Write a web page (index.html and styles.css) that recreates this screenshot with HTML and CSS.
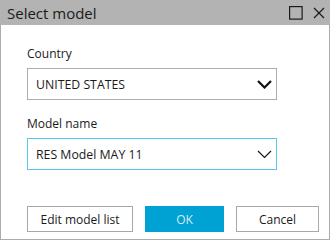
FILE: index.html
```html
<!DOCTYPE html>
<html lang="en">
<head>
  <meta charset="UTF-8" />
  <title>Select model</title>
  <link rel="stylesheet" href="styles.css">
</head>
<body>
  <div class="window">
    <div class="titlebar">
      <span class="title">Select model</span>
      <div class="title-icons">
        <svg width="14" height="14" viewBox="0 0 14 14">
          <rect x="0.6" y="0.6" width="12.5" height="12.5" fill="none" stroke="#1a1a1a" stroke-width="1.2"/>
        </svg>
        <svg width="12" height="12" viewBox="0 0 12 12">
          <path d="M1 1 L11 11 M11 1 L1 11" stroke="#1a1a1a" stroke-width="1.2" fill="none"/>
        </svg>
      </div>
    </div>

    <div class="content">
      <label class="field-label">Country</label>
      <div class="select">
        <span>UNITED STATES</span>
        <svg class="chevron" width="15" height="9" viewBox="0 0 15 9">
          <path d="M1 1 L7.5 7.5 L14 1" stroke="#111" stroke-width="2.2" fill="none"/>
        </svg>
      </div>

      <label class="field-label second">Model name</label>
      <div class="select focused">
        <span>RES Model MAY 11</span>
        <svg class="chevron" width="15" height="9" viewBox="0 0 15 9">
          <path d="M1 1 L7.5 7.5 L14 1" stroke="#111" stroke-width="1.1" fill="none"/>
        </svg>
      </div>

      <div class="buttons">
        <button class="btn edit">Edit model list</button>
        <button class="btn ok">OK</button>
        <button class="btn cancel">Cancel</button>
      </div>
    </div>
  </div>
</body>
</html>
```

FILE: styles.css
```css
body {
  margin: 0;
  font-family: 'Open Sans', 'Noto Sans', sans-serif;
  color: #1a1a1a;
  background: #fff;
}

.window {
  width: 330px;
  height: 240px;
  box-sizing: border-box;
  border: 1px solid #ababab;
  border-top: none;
  background: #fff;
}

.titlebar {
  height: 25px;
  margin: 0 -1px;
  background-color: #b3b3b3;
  display: flex;
  align-items: center;
  justify-content: space-between;
  padding: 0 5px 0 7px;
}

.title {
  font-size: 15px;
  color: #1a1a1a;
}

.title-icons {
  display: flex;
  align-items: center;
  gap: 10px;
}

.title-icons svg {
  display: block;
}

.content {
  padding: 21px 0 0 26px;
}

.field-label {
  display: block;
  font-size: 12px;
  line-height: 16px;
  margin-bottom: 6px;
}

.field-label.second {
  margin-top: 16px;
}

.select {
  width: 250px;
  height: 32px;
  box-sizing: border-box;
  border: 1px solid #adadad;
  display: flex;
  align-items: center;
  justify-content: space-between;
  padding: 0 4px 0 8px;
  font-size: 12.3px;
}

.select.focused {
  border-color: #5ac8ec;
}

.chevron {
  display: block;
}

.buttons {
  display: flex;
  gap: 12px;
  margin-top: 36px;
}

.btn {
  height: 26px;
  box-sizing: border-box;
  font-family: inherit;
  font-size: 12px;
  color: #1a1a1a;
  background: #fff;
  border: 1px solid #a8a8a8;
  padding: 0;
  cursor: pointer;
}

.btn.edit {
  width: 106px;
}

.btn.ok {
  width: 79px;
  background-color: #00a2d3;
  border-color: #00a2d3;
  color: #d3ecf5;
}

.btn.cancel {
  width: 83px;
}
```
